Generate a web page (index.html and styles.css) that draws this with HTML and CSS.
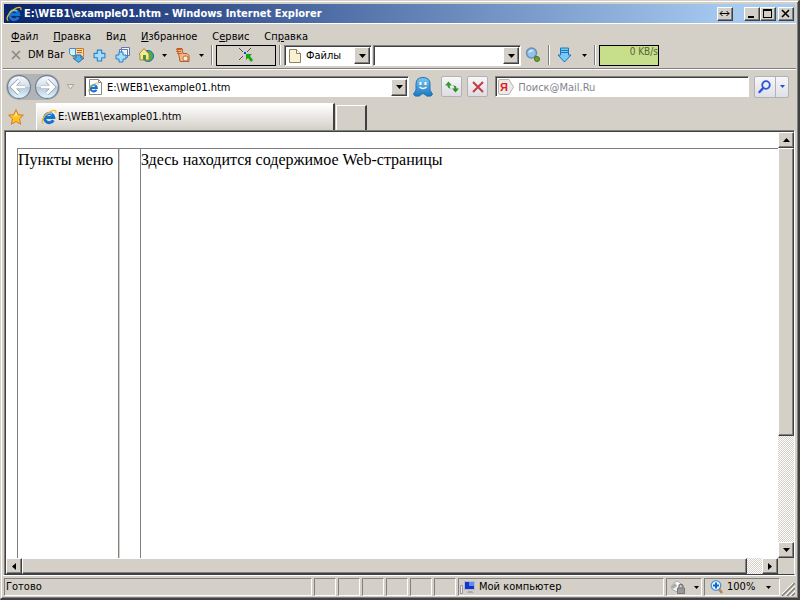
FILE: index.html
```html
<!DOCTYPE html>
<html lang="ru">
<head>
<meta charset="utf-8">
<title>E:\WEB1\example01.htm - Windows Internet Explorer</title>
<link rel="stylesheet" href="styles.css">
</head>
<body>
<svg class="defs" aria-hidden="true">
  <defs>
    <linearGradient id="blue" x1="0" y1="0" x2="0" y2="1"><stop offset="0" stop-color="#7cc8ee"/><stop offset="1" stop-color="#1976c4"/></linearGradient>
    <linearGradient id="orb" x1="0" y1="0" x2="0" y2="1"><stop offset="0" stop-color="#fafcfe"/><stop offset=".48" stop-color="#d3dde8"/><stop offset=".5" stop-color="#b4c4d6"/><stop offset="1" stop-color="#e4fafe"/></linearGradient>
    <symbol id="ie" viewBox="0 0 16 16">
      <path d="M12.300 11.200A4.600 4.600 0 1 1 12.800 8.600H5" fill="none" stroke="#1672cf" stroke-width="3"/>
      <path d="M4 6.500a5 5 0 0 1 7-1.500" fill="none" stroke="#77cdfb" stroke-width="1.200"/>
      <path d="M2.300 14.800C-.5 13 2 7.500 7 4 11 1 16 0 14.700 4" fill="none" stroke="#f3b51c" stroke-width="1.300"/>
    </symbol>
    <symbol id="caret" viewBox="0 0 7 4"><path d="M0 0h7L3.500 4z"/></symbol>
    <symbol id="plus" viewBox="0 0 12 12"><path d="M4 1h4v3h3v4H8v3H4V8H1V4h3z" fill="#a7dcfb" stroke="#2382c9" stroke-linejoin="round"/></symbol>
  </defs>
</svg>
<div class="window">
  <header class="titlebar">
    <svg class="icon16"><use href="#ie"/></svg>
    <h1 class="title">E:\WEB1\example01.htm - Windows Internet Explorer</h1>
    <button class="winbtn winbtn-span" aria-label="Растянуть"><svg width="11" height="7" viewBox="0 0 11 7"><path d="M1 3.500h9M3.500 1L1 3.500 3.500 6M7.500 1L10 3.500 7.500 6" fill="none" stroke="#000"/></svg></button>
    <button class="winbtn" aria-label="Свернуть"><svg width="10" height="9" viewBox="0 0 10 9"><path d="M1 7h6v2H1z"/></svg></button>
    <button class="winbtn" aria-label="Развернуть"><svg width="10" height="9" viewBox="0 0 10 9"><path d="M0 0h9v9H0zM1 2v6h7V2z" fill-rule="evenodd"/></svg></button>
    <button class="winbtn winbtn-close" aria-label="Закрыть"><svg width="10" height="9" viewBox="0 0 10 9"><path d="M1 1l7 7M8 1L1 8" stroke="#000" stroke-width="1.600"/></svg></button>
  </header>

  <nav class="menu">
    <button><u>Ф</u>айл</button>
    <button><u>П</u>равка</button>
    <button>Ви<u>д</u></button>
    <button><u>И</u>збранное</button>
    <button>С<u>е</u>рвис</button>
    <button>Сп<u>р</u>авка</button>
  </nav>

  <div class="toolbar">
    <button class="tool tool-x" aria-label="Закрыть панель"><svg width="10" height="10" viewBox="0 0 10 10"><path d="M1 1l8 8M9 1L1 9" stroke="#8b8985" stroke-width="1.700"/></svg></button>
    <span class="dmbar">DM Bar</span>
    <button class="tool" aria-label="Корзина"><svg class="icon16" viewBox="0 0 16 16"><path d="M3.500 1.500h11v8h-11z" fill="#fbd7a5" stroke="#d07b22"/><path d="M8 3.500h5M8 5.500h5" stroke="#b4691f"/><path d="M.5 1.500h6v7h-4l-2-2z" fill="#d5eefb" stroke="#3d8fc6"/><path d="M7 8h5v3h3l-5.500 4.500L4 11h3z" fill="#57b2ec" stroke="#1b70b4"/></svg></button>
    <button class="tool" aria-label="Добавить"><svg width="13" height="13"><use href="#plus"/></svg></button>
    <button class="tool" aria-label="Добавить список"><svg class="icon16" viewBox="0 0 16 16"><path d="M6.500.5h8v8h-8zM4.500 2.500h8v8h-8z" fill="#eef4fb" stroke="#5d7bac"/><use href="#plus" x="0" y="4" width="12" height="12"/></svg></button>
    <button class="tool" aria-label="Домой"><svg class="icon16" viewBox="0 0 16 16"><circle cx="10" cy="9" r="5.500" fill="#3595d3" stroke="#19659f"/><path d="M10 4c5 1 6 5 3 9l-4 2z" fill="#4aaf3b"/><path d="M1 7l5-5.500L11 7v6H2V8z" fill="#f7e697" stroke="#a98b2b"/><path d="M5 8h3v5H5z" fill="#3f963b"/></svg></button>
    <button class="caret-btn" aria-label="Ещё"><svg class="caret caret-small"><use href="#caret"/></svg></button>
    <button class="tool" aria-label="Скорость"><svg class="icon16" viewBox="0 0 16 16"><path d="M2 1.500h5l1 5h4l2 2v6H5l-1-6z" fill="#f4b58b" stroke="#b35e2d"/><path d="M1 2.500h6M1 4.500h5M2 6.500h5" stroke="#d16228"/><rect x="8" y="9" width="5" height="5" rx="2" fill="#fff1da" stroke="#bf6b31"/></svg></button>
    <button class="caret-btn" aria-label="Ещё"><svg class="caret caret-small"><use href="#caret"/></svg></button>
    <i class="sep"></i>
    <button class="target" aria-label="Цель"><svg width="18" height="16" viewBox="0 0 18 16"><path d="M2 1l4 4M14 1l-4 4M2 13l4-4" stroke="#555"/><path d="M7 5h2v2H7z" fill="#2438e0"/><path d="M9 7h6l-2 2 3 4-2 2-3-4-2 2z" fill="#16a516"/></svg></button>
    <i class="sep sep-double"></i>
    <div class="combo combo-files">
      <svg class="icon16" viewBox="0 0 16 16"><path d="M2.500 1.500h7l4 4v9h-11z" fill="#faf0d2" stroke="#8e8060"/><path d="M9.500 1.500v4h4" fill="#fff" stroke="#8e8060"/></svg>
      <select aria-label="Тип поиска"><option>Файлы</option></select>
      <span class="drop"><svg class="caret"><use href="#caret"/></svg></span>
    </div>
    <div class="combo combo-query">
      <input type="text" aria-label="Запрос">
      <button class="drop" aria-label="Список"><svg class="caret"><use href="#caret"/></svg></button>
    </div>
    <button class="tool tool-wide" aria-label="Найти"><svg class="icon16" viewBox="0 0 16 16"><circle cx="6.500" cy="6" r="5" fill="#8fc4ee" stroke="#6d8fae" stroke-width="1.500"/><path d="M3 6q2-4 6-2-3 0-6 2" fill="#fff"/><path d="M9.500 9l1.500 1.500" stroke="#777" stroke-width="2"/><circle cx="12" cy="12" r="2.500" fill="#6fa52d" stroke="#47741a"/></svg></button>
    <i class="sep"></i>
    <button class="tool tool-wide" aria-label="Загрузки"><svg class="icon16" viewBox="0 0 16 16"><path d="M3.500 1h8v7H14l-6.500 7L1 8h2.500z" fill="#78c9f5" stroke="#1777bb"/><path d="M4 3.500h7M4 5.500h7" stroke="#1777bb"/></svg></button>
    <button class="caret-btn" aria-label="Ещё"><svg class="caret caret-small"><use href="#caret"/></svg></button>
    <i class="sep"></i>
    <output class="speed">0 KB/s</output>
  </div>

  <div class="navbar">
    <div class="history">
      <button aria-label="Назад"><svg width="26" height="26" viewBox="0 0 26 26"><circle cx="13" cy="13" r="11.500" fill="url(#orb)" stroke="#74869a" stroke-width="1.300"/><path d="M13 6.500L6.500 13l6.500 6.500M7 13h12" fill="none" stroke="#8296a9" stroke-width="4.200"/><path d="M13 6.500L6.500 13l6.500 6.500M7 13h12" fill="none" stroke="#fff" stroke-width="3"/></svg></button>
      <button aria-label="Вперёд"><svg width="26" height="26" viewBox="0 0 26 26"><circle cx="13" cy="13" r="11.500" fill="url(#orb)" stroke="#74869a" stroke-width="1.300"/><path d="M13 6.500l6.500 6.500-6.500 6.500M19 13H7" fill="none" stroke="#8296a9" stroke-width="4.200"/><path d="M13 6.500l6.500 6.500-6.500 6.500M19 13H7" fill="none" stroke="#fff" stroke-width="3"/></svg></button>
    </div>
    <button class="recent" aria-label="Последние страницы"><svg width="9" height="6" viewBox="0 0 9 6"><path d="M1 .5h7L4.500 5z" fill="#e8e5df" stroke="#aaa69d"/></svg></button>
    <div class="combo address">
      <svg class="icon16" viewBox="0 0 16 16"><path d="M2.500.5h9l3 3v12h-12z" fill="#fff" stroke="#8a8a8a"/><path d="M11.500.5v3h3" fill="none" stroke="#8a8a8a"/><use href="#ie" x="1" y="3" width="11" height="11"/></svg>
      <input type="text" aria-label="Адрес" value="E:\WEB1\example01.htm">
      <button class="drop" aria-label="Список адресов"><svg class="caret"><use href="#caret"/></svg></button>
    </div>
    <button class="agent" aria-label="Агент"><svg width="20" height="20" viewBox="0 0 20 20"><path d="M10 .5q7 0 7 6.500v6q1 2 2.500 4-1 3-4 2-2 1-3.500-1.500l-2-1-2 1Q6.500 20 4.500 19q-3 1-4-2Q2 15 3 13V7Q3 .5 10 .5z" fill="url(#blue)" stroke="#1a75b8"/><path d="M6.500 5h2v3h-2zM11.500 5h2v3h-2z" fill="#fff"/><path d="M6.500 10q3.500 3 7 0" fill="none" stroke="#fff" stroke-width="1.400"/></svg></button>
    <button class="soft" aria-label="Обновить"><svg class="icon16" viewBox="0 0 16 16"><path d="M4.500 2.500L8 6.500H5.500Q5.500 9 7.500 9.500 3.500 10 3.500 6.500H1z" fill="#2f9b31"/><path d="M11.500 13.500L8 9.500h2.500Q10.500 7 8.500 6.500q4-.5 4 3H15z" fill="#2f8b31"/></svg></button>
    <button class="soft" aria-label="Остановить"><svg width="12" height="12" viewBox="0 0 12 12"><path d="M1 1l10 10M11 1L1 11" stroke="#c43b46" stroke-width="2"/></svg></button>
    <div class="combo search">
      <svg class="icon16" viewBox="0 0 16 16"><path d="M.5 2q0-1.500 1.500-1.500h9L15.500 8 11 15.500H2Q.5 15.500.5 14z" fill="#eceae7" stroke="#b5b5b5"/><text x="2" y="12" class="ya">Я</text></svg>
      <input type="text" aria-label="Поиск" placeholder="Поиск@Mail.Ru">
    </div>
    <div class="go">
      <button class="go-find" aria-label="Искать"><svg width="14" height="14" viewBox="0 0 14 14"><circle cx="8" cy="5" r="3.800" fill="none" stroke="#2855df" stroke-width="1.800"/><path d="M5.200 8L1.500 12" stroke="#2855df" stroke-width="2.400" stroke-linecap="round"/></svg></button>
      <button class="go-more" aria-label="Поставщики"><svg width="5" height="3" viewBox="0 0 7 4"><path d="M0 0h7L3.500 4z" fill="#2450c8"/></svg></button>
    </div>
  </div>

  <div class="tabs">
    <button class="fav" aria-label="Избранное"><svg class="icon16" viewBox="0 0 16 16"><path d="M8 .7l2.200 5 5.200.5-3.900 3.600 1.100 5.400L8 12.400l-4.600 2.800 1.100-5.400L.6 6.200l5.200-.5z" fill="#ffc529" stroke="#d7791c"/><path d="M8 3l1.400 3.600-4.400.3 2-.6z" fill="#fff3a6"/></svg></button>
    <button class="tab"><svg class="icon16"><use href="#ie"/></svg>E:\WEB1\example01.htm</button>
    <button class="newtab" aria-label="Новая вкладка"></button>
  </div>

  <main class="view">
    <div class="page">
      <div class="layout">
        <div class="cell">Пункты меню</div>
        <div class="cell"></div>
        <div class="cell">Здесь находится содержимое Web-страницы</div>
      </div>
    </div>
    <div class="vscroll">
      <button class="arrow" aria-label="Вверх"><svg class="caret up"><use href="#caret"/></svg></button>
      <div class="track"><div class="thumb"></div></div>
      <button class="arrow" aria-label="Вниз"><svg class="caret"><use href="#caret"/></svg></button>
    </div>
    <div class="hscroll">
      <button class="arrow" aria-label="Влево"><svg width="4" height="7" viewBox="0 0 4 7"><path d="M4 0v7L0 3.500z"/></svg></button>
      <div class="track"><div class="thumb"></div></div>
      <button class="arrow" aria-label="Вправо"><svg width="4" height="7" viewBox="0 0 4 7"><path d="M0 0v7l4-3.500z"/></svg></button>
    </div>
    <div class="corner"></div>
  </main>

  <footer class="status">
    <div class="pane pane-text">Готово</div>
    <div class="pane pane-small"></div>
    <div class="pane pane-small"></div>
    <div class="pane pane-small"></div>
    <div class="pane pane-small"></div>
    <div class="pane pane-small"></div>
    <div class="pane pane-small"></div>
    <div class="pane pane-zone"><svg class="icon16" viewBox="0 0 16 16"><path d="M1.500 6.500h2v8h-2z" fill="#eee" stroke="#999"/><path d="M5.500 2.500h10v8h-10z" fill="#1734c9" stroke="#b6b9c9"/><path d="M10 3h5v4h-5z" fill="#5a90f5"/><path d="M9 12h4l2 2H8z" fill="#aaa"/></svg>Мой компьютер</div>
    <button class="pane pane-lock" aria-label="Защищённый режим"><svg class="icon16" viewBox="0 0 16 16"><path d="M1 9q2-6 7-7l4 4-4 7-5-2z" fill="#f4f4f4" stroke="#aaa"/><path d="M1 8l4-4 2 3-4 3z" fill="#aaa"/><path d="M9 9V7.500a2 2 0 0 1 4 0V9" fill="none" stroke="#777" stroke-width="1.300"/><path d="M7.500 9h7v5.500h-7z" fill="#999" stroke="#777"/></svg><svg class="caret caret-small"><use href="#caret"/></svg></button>
    <button class="pane pane-zoom"><svg class="icon16" viewBox="0 0 16 16"><path d="M10 10l3 4" stroke="#b9824d" stroke-width="2.500"/><circle cx="7" cy="6.500" r="4.800" fill="#e6f5ff" stroke="#4c92d0" stroke-width="1.300"/><path d="M7 3.500v6M4 6.500h6" stroke="#0869cf" stroke-width="2"/></svg><span>100%</span><svg class="caret caret-small"><use href="#caret"/></svg></button>
    <svg class="grip" viewBox="0 0 13 13"><path d="M0 13L13 0M5 13l8-8M10 13l3-3" stroke="#85827c" stroke-width="1.500"/><path d="M-2 13L13-2M3 13L13 3M8 13l5-5" stroke="#fff"/></svg>
  </footer>
</div>
</body>
</html>
```
FILE: styles.css
```css
* { box-sizing: border-box; }

body {
  margin: 0;
  background: #d4d0c8;
  color: #000;
  font: 11px/14px "DejaVu Sans Condensed", "DejaVu Sans", sans-serif;
}

button, input, select {
  margin: 0;
  padding: 0;
  border: 0;
  border-radius: 0;
  background: none;
  color: inherit;
  font: inherit;
  appearance: none;
  outline: none;
}

svg { display: block; flex: none; }
.defs { position: absolute; width: 0; height: 0; }
.icon16 { width: 16px; height: 16px; }
.caret { width: 7px; height: 4px; }
.caret-small { width: 5px; height: 3px; }
.up { transform: rotate(180deg); }

.window {
  display: flex;
  flex-direction: column;
  height: 100vh;
  padding: 2px 2px 1px;
  border: 1px solid #d4d0c8;
  border-right: 2px solid #404040;
  border-bottom: 2px solid #404040;
  box-shadow: inset 1px 1px #fff, inset -1px -1px #808080;
}

/* Title bar */
.titlebar {
  display: flex;
  align-items: center;
  flex: none;
  height: 19px;
  margin: 1px 1px 0;
  padding: 0 1px 0 2px;
  background: linear-gradient(90deg, #0a246a, #a6caf0 92%);
  color: #fff;
}
.title {
  flex: 1;
  margin: 0 0 0 2px;
  font-size: 11px;
  font-weight: bold;
  white-space: nowrap;
}
.winbtn, .drop, .arrow {
  display: flex;
  align-items: center;
  justify-content: center;
  flex: none;
  background: #d4d0c8;
  border: 1px solid;
  border-color: #fff #404040 #404040 #fff;
  box-shadow: inset -1px -1px #808080;
}
.winbtn { width: 16px; height: 14px; padding: 0 1px 1px 0; }
.winbtn-span { margin-right: 11px; }
.winbtn-close { margin-left: 2px; }

/* Menu */
.menu {
  display: flex;
  gap: 15px;
  flex: none;
  height: 21px;
  padding: 5px 8px 0;
  border-top: 1px solid #fff;
}
.menu u { text-underline-offset: 1px; }

/* Download toolbar */
.toolbar {
  display: flex;
  align-items: center;
  flex: none;
  height: 25px;
  padding: 0 0 2px 7px;
  border-bottom: 1px solid #808080;
}
.tool {
  display: flex;
  align-items: center;
  justify-content: center;
  flex: none;
  width: 23px;
  height: 20px;
}
.tool-x { width: 12px; }
.tool-wide { width: 24px; }
.dmbar { width: 43px; padding-left: 6px; white-space: nowrap; }
.caret-btn { display: flex; justify-content: center; flex: none; width: 14px; }
.sep {
  flex: none;
  width: 2px;
  height: 20px;
  margin: 0 3px;
  border-left: 1px solid #808080;
  border-right: 1px solid #fff;
}
.target {
  display: flex;
  align-items: center;
  justify-content: center;
  flex: none;
  width: 60px;
  height: 21px;
  border: 1px solid #000;
}
.combo {
  display: flex;
  align-items: center;
  height: 21px;
  background: #fff;
  border: 1px solid;
  border-color: #808080 #fff #fff #808080;
  box-shadow: inset 1px 1px #404040;
  padding: 2px 1px 1px 2px;
}
.combo input, .combo select { flex: 1; min-width: 0; height: 16px; }
.drop { width: 16px; height: 17px; }
.combo-files { width: 88px; flex: none; margin-right: 1px; }
.combo-files select { margin-left: 3px; }
.combo-query { width: 148px; flex: none; }
.speed {
  flex: none;
  width: 60px;
  height: 21px;
  overflow: hidden;
  border: 1px solid #000;
  background: #c7df8b;
  color: #56633c;
  font-size: 10px;
  line-height: 12px;
  text-align: right;
  white-space: nowrap;
}

/* Navigation bar */
.navbar {
  display: flex;
  align-items: center;
  flex: none;
  height: 34px;
  padding: 0 7px 0 3px;
  border-top: 1px solid #fff;
}
.history {
  display: flex;
  gap: 2px;
  flex: none;
  border-radius: 14px;
  background: #b2b3b4;
}
.recent { display: flex; justify-content: center; width: 24px; flex: none; padding-right: 3px; }
.address { flex: 327 1 0; }
.address input, .search input { margin-left: 4px; }
.search { flex: 254 1 0; }
.search input::placeholder { color: #83858d; opacity: 1; }
.ya { font: bold 11px "Liberation Sans", sans-serif; fill: #e02020; }
.agent { flex: none; margin: 0 8px 0 4px; }
.soft {
  display: flex;
  align-items: center;
  justify-content: center;
  flex: none;
  width: 21px;
  height: 21px;
  margin-right: 5px;
  border: 1px solid #b2b1b7;
  border-radius: 2px;
  background: linear-gradient(#f7f7f8, #dddde2);
}
.search { margin-left: 2px; }
.go {
  display: flex;
  flex: none;
  height: 22px;
  margin-left: 5px;
  border: 1px solid #b2b1b7;
  border-radius: 2px;
  background: linear-gradient(#f7f7f8, #dfdfe7);
}
.go button { display: flex; align-items: center; justify-content: center; }
.go-find { width: 20px; }
.go .go-more { width: 13px; border-left: 1px solid #b2b1b7; }

/* Tabs */
.tabs { display: flex; align-items: flex-end; flex: none; height: 27px; padding-left: 5px; }
.fav { align-self: center; flex: none; width: 28px; }
.tab {
  display: flex;
  align-items: center;
  gap: 1px;
  flex: 0 0 299px;
  height: 27px;
  padding: 0 4px;
  border-top: 1px solid #fff;
  border-left: 1px solid #fff;
  border-right: 2px solid #404040;
  background: linear-gradient(#fff, #d4d0c8);
}
.newtab {
  width: 31px;
  height: 25px;
  margin-left: 1px;
  border-top: 1px solid #fff;
  border-left: 1px solid #fff;
  border-right: 2px solid #404040;
}

/* Page area */
.view {
  display: grid;
  grid-template: minmax(0, 1fr) 16px / minmax(0, 1fr) 16px;
  flex: 1;
  min-height: 0;
  margin: 0 1px;
  border: 1px solid;
  border-color: #808080 #fff #404040 #808080;
  box-shadow: inset 1px 1px #404040;
  padding: 1px 0 0 1px;
}
.page {
  display: flex;
  padding: 16px 0 0 11px;
  background: #fff;
  overflow: hidden;
  font: 16px/18px "Liberation Serif", serif;
}
.layout {
  display: grid;
  grid-template-columns: 101px 22px minmax(0, 1fr);
  flex: 1;
  border-top: 1px solid #808080;
}
.cell { padding: 2px 0 0; border-left: 1px solid #808080; white-space: nowrap; }
.cell:nth-child(2) { box-shadow: inset 1px 0 #d4d0c8; }

.vscroll { display: flex; flex-direction: column; }
.hscroll { display: flex; min-width: 0; }
.arrow { width: 16px; height: 16px; }
.track {
  flex: 1;
  min-width: 0;
  background: repeating-conic-gradient(#d4d0c8 0 25%, #fff 0 50%) 0 0 / 2px 2px;
}
.thumb {
  background: #d4d0c8;
  border: 1px solid;
  border-color: #fff #404040 #404040 #fff;
  box-shadow: inset -1px -1px #808080;
}
.vscroll .thumb { height: 73%; }
.hscroll .thumb { width: 98%; height: 16px; }
.corner { background: #d4d0c8; }

/* Status bar */
.status { display: flex; flex: none; gap: 2px; height: 22px; padding: 2px 1px 1px; border-top: 1px solid #fff; }
.pane {
  display: flex;
  align-items: center;
  flex: none;
  border: 1px solid;
  border-color: #808080 #fff #fff #808080;
  white-space: nowrap;
}
.pane-text { flex: 308 1 0; padding-left: 1px; }
.pane-small { width: 22px; }
.pane-zone { flex: 206 1 0; gap: 4px; }
.pane-lock { width: 36px; gap: 8px; padding-left: 3px; }
.pane-zoom { width: 76px; gap: 2px; padding: 0 8px 0 4px; }
.pane-zoom span { flex: 1; text-align: left; }
.grip { width: 13px; height: 13px; align-self: flex-end; overflow: hidden; }
```
